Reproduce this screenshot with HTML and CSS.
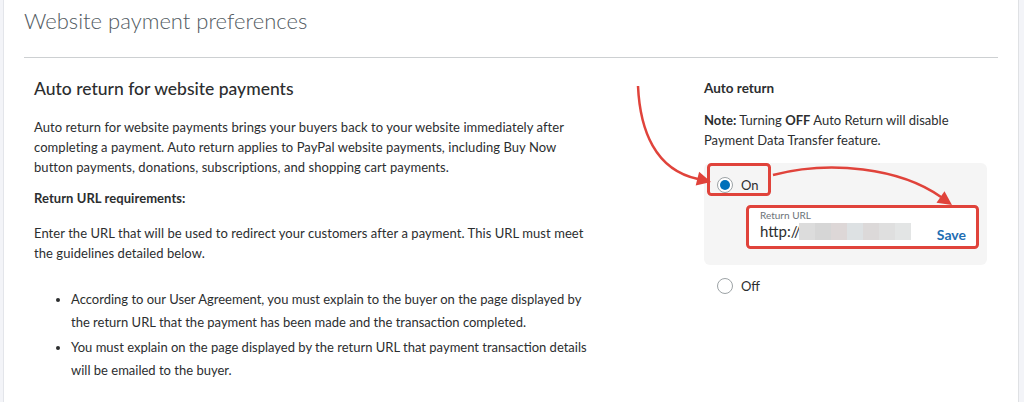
FILE: index.html
```html
<!DOCTYPE html>
<html lang="en">
<head>
<meta charset="utf-8">
<title>Website payment preferences</title>
<link rel="stylesheet" href="styles.css">
</head>
<body>
<div class="page">
  <h1 class="title">Website payment preferences</h1>
  <hr class="divider">
  <div class="content">
    <section class="main-col">
      <h2 class="section-title">Auto return for website payments</h2>
      <p class="text">Auto return for website payments brings your buyers back to your website immediately after completing a payment. Auto return applies to PayPal website payments, including Buy Now button payments, donations, subscriptions, and shopping cart payments.</p>
      <h3 class="sub-title">Return URL requirements:</h3>
      <p class="text">Enter the URL that will be used to redirect your customers after a payment. This URL must meet the guidelines detailed below.</p>
      <ul class="rules">
        <li>According to our User Agreement, you must explain to the buyer on the page displayed by the return URL that the payment has been made and the transaction completed.</li>
        <li>You must explain on the page displayed by the return URL that payment transaction details will be emailed to the buyer.</li>
      </ul>
    </section>
    <aside class="side-col">
      <h4 class="side-title">Auto return</h4>
      <p class="note"><strong class="em">Note:</strong> Turning <strong class="em">OFF</strong> Auto Return will disable Payment Data Transfer feature.</p>
      <div class="option-box">
        <div class="radio-row"><span class="radio checked"></span><span>On</span></div>
        <div class="url-field">
          <span class="field-label">Return URL</span>
          <div class="field-row">
            <span class="field-value">http://<span class="blur"><i class="b1"></i><i class="b2"></i><i class="b3"></i><i class="b4"></i><i class="b5"></i><i class="b6"></i><i class="b7"></i></span></span>
            <span class="save">Save</span>
          </div>
        </div>
      </div>
      <div class="radio-row off"><span class="radio"></span><span>Off</span></div>
    </aside>
  </div>
</div>
<svg class="annotations" width="1024" height="402" viewBox="0 0 1024 402">
  <rect x="708.5" y="164.5" width="61" height="30" rx="3" class="mark"/>
  <rect x="747.5" y="206.5" width="230" height="41" rx="3" class="mark"/>
  <path d="M638,86 C640,130 655,170 698,179" class="arrow"/>
  <polygon points="711,182 695.7,185.4 699.1,171.8" class="head"/>
  <path d="M773,175 C830,160 900,168 941,197" class="arrow"/>
  <polygon points="952,205 936.5,202.7 944.5,191.3" class="head"/>
</svg>
</body>
</html>
```
FILE: styles.css
```css
* { box-sizing: border-box; }
html, body { margin: 0; padding: 0; }
body {
  background: #f3f4f8;
  font-family: Lato, "Noto Sans", sans-serif;
  color: #2c2e2f;
  height: 402px;
  overflow: hidden;
  position: relative;
}
.page {
  margin-left: 3px;
  width: 1016px;
  min-height: 402px;
  background: #fff;
  border-left: 1px solid #e3e5ea;
  border-right: 1px solid #dfe1e4;
  padding: 0 20px;
}
.title {
  margin: 0;
  padding-top: 8px;
  font-size: 22px;
  font-weight: 300;
  color: #535b62;
  line-height: 26px;
  height: 57px;
}
.divider {
  margin: 0;
  border: 0;
  border-top: 1px solid #cdd0d2;
}
.content {
  display: flex;
  padding-left: 10px;
}
.main-col {
  width: 560px;
  padding-top: 20px;
  letter-spacing: 0.06px;
}
.section-title {
  margin: 0 0 17px;
  font-size: 17.5px;
  font-weight: 500;
  line-height: 22px;
  letter-spacing: 0;
}
.text {
  max-width: 554px;
  margin: 0 0 11px;
  font-size: 13px;
  line-height: 20px;
  color: #2c2e2f;
}
.sub-title {
  margin: 0 0 15px;
  font-size: 13px;
  font-weight: 700;
  line-height: 20px;
}
.rules {
  margin: 25px 0 0;
  padding-left: 37px;
  font-size: 13px;
  line-height: 23px;
  letter-spacing: 0;
}
.rules li { margin-bottom: 2px; }
.side-col {
  margin-left: 110px;
  width: 283px;
  padding-top: 20px;
}
.side-title {
  margin: 0 0 12px;
  font-size: 13.5px;
  font-weight: 700;
  line-height: 20px;
}
.note {
  margin: 0 0 13px;
  font-size: 13px;
  line-height: 20px;
}
.note .em { font-weight: 700; }
.option-box {
  background: #f5f5f5;
  border-radius: 6px;
  padding: 12px 8px 16px 13px;
}
.radio-row {
  display: flex;
  align-items: center;
  gap: 8px;
  font-size: 13px;
  height: 20px;
}
.radio {
  width: 16px;
  height: 16px;
  border-radius: 50%;
  border: 1px solid #9da3a6;
  background: #fff;
  display: inline-flex;
  align-items: center;
  justify-content: center;
}
.radio.checked::after {
  content: "";
  width: 10px;
  height: 10px;
  border-radius: 50%;
  background: #0070ba;
}
.url-field {
  margin: 11px 0 0 29px;
  width: 232px;
  height: 43px;
  background: #fff;
  border-radius: 4px;
  padding: 3px 12px 0 14px;
}
.field-label {
  display: block;
  font-size: 10px;
  line-height: 12px;
  color: #6c7378;
}
.field-row {
  display: flex;
  justify-content: space-between;
  align-items: flex-end;
}
.field-value {
  display: flex;
  align-items: center;
  font-size: 15px;
  line-height: 20px;
  color: #2c2e2f;
}
.blur { display: inline-flex; margin-left: -2px; }
.blur i { display: block; width: 16px; height: 17px; }
.b1 { background: #dcdcdc; }
.b2 { background: #d6d6d6; }
.b3 { background: #ddd7d7; }
.b4 { background: #dde1e3; }
.b5 { background: #dcd9d9; }
.b6 { background: #dfdfdf; }
.b7 { background: #e3e5e5; }
.save {
  font-size: 14px;
  font-weight: 700;
  color: #1f6eb3;
  line-height: 16px;
  margin-bottom: -2px;
}
.radio-row.off {
  margin: 11px 0 0 13px;
}
.annotations {
  position: absolute;
  left: 0;
  top: 0;
  pointer-events: none;
}
.mark { fill: none; stroke: #e0433b; stroke-width: 3; }
.arrow { fill: none; stroke: #e0433b; stroke-width: 2.5; }
.head { fill: #e0433b; }
```
